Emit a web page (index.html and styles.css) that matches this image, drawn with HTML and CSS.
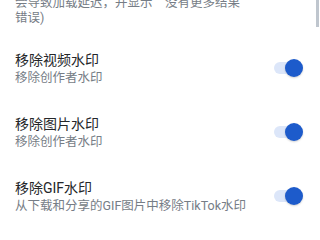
FILE: index.html
```html
<!DOCTYPE html>
<html lang="zh-CN">
<head>
<meta charset="utf-8">
<link rel="stylesheet" href="styles.css">
</head>
<body>
<div class="scrollbar"></div>
<div class="list">
  <div class="item partial">
    <div class="text">
      <div class="desc">会导致加载延迟，并显示<span class="cjk">“</span>没有更多结果<span class="cjk">”</span><br>错误)</div>
    </div>
  </div>
  <div class="item">
    <div class="text">
      <div class="title">移除视频水印</div>
      <div class="sub">移除创作者水印</div>
    </div>
    <div class="toggle"><span class="track"></span><span class="thumb"></span></div>
  </div>
  <div class="item">
    <div class="text">
      <div class="title">移除图片水印</div>
      <div class="sub">移除创作者水印</div>
    </div>
    <div class="toggle"><span class="track"></span><span class="thumb"></span></div>
  </div>
  <div class="item">
    <div class="text">
      <div class="title">移除GIF水印</div>
      <div class="sub">从下载和分享的GIF图片中移除TikTok水印</div>
    </div>
    <div class="toggle"><span class="track"></span><span class="thumb"></span></div>
  </div>
</div>
</body>
</html>
```

FILE: styles.css
```css
html, body {
  margin: 0;
  padding: 0;
  background: #ffffff;
  overflow: hidden;
}
body {
  width: 320px;
  height: 240px;
  position: relative;
  font-family: Roboto, "Noto Sans CJK SC", sans-serif;
}
.list {
  display: flex;
  flex-direction: column;
}
.item {
  display: flex;
  align-items: center;
  padding: 14px 17px 14px 15px;
  gap: 12px;
}
.item.partial {
  padding-top: 0;
  padding-bottom: 11px;
}
.text {
  flex: 1;
  min-width: 0;
}
.desc {
  margin-top: -6px;
  font-size: 12.5px;
  line-height: 15px;
  color: #767d86;
  white-space: nowrap;
}
.cjk {
  font-family: "Noto Sans CJK SC", sans-serif;
}
.title {
  font-size: 14px;
  line-height: 20px;
  color: #25272a;
}
.sub {
  font-size: 12.5px;
  line-height: 16px;
  color: #767d86;
  white-space: nowrap;
}
.toggle {
  position: relative;
  width: 29px;
  height: 18px;
  flex: none;
}
.track {
  position: absolute;
  left: 0;
  top: 3px;
  width: 26px;
  height: 12px;
  border-radius: 6px;
  background: #dce6f9;
}
.thumb {
  position: absolute;
  right: 0;
  top: 0;
  width: 18px;
  height: 18px;
  border-radius: 50%;
  background: #1d5bcb;
  box-shadow: 0 1px 2px rgba(0,0,0,0.18);
}
.scrollbar {
  position: absolute;
  right: 1px;
  top: 0;
  width: 3px;
  height: 27px;
  background: #bfc6ce;
}
```
